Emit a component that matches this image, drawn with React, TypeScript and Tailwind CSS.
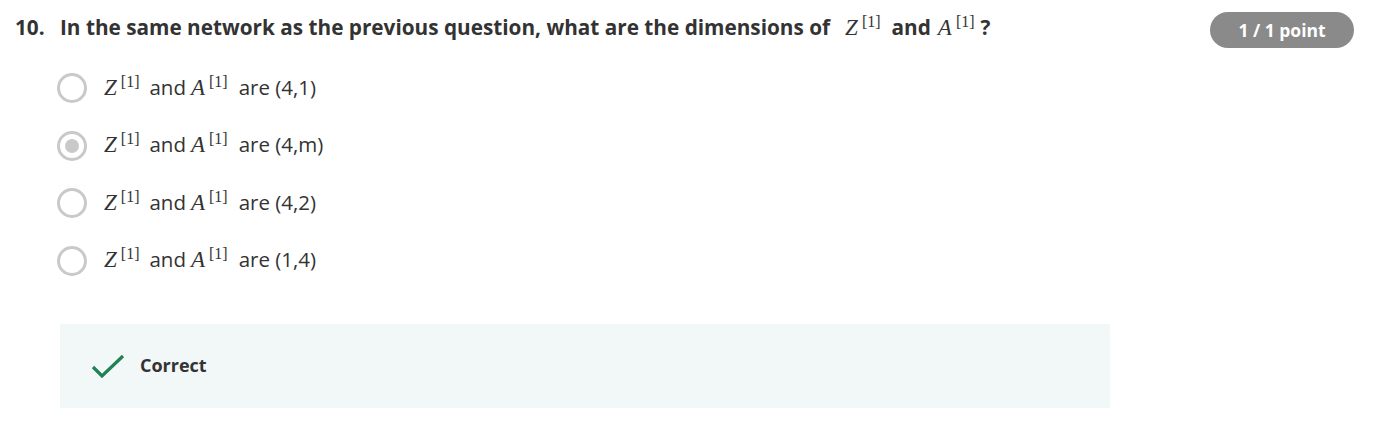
import React from 'react';

const M = ({ v, className = '' }: { v: string; className?: string }) => (
  <span className={`whitespace-nowrap font-normal ${className}`} style={{ fontFamily: '"Liberation Serif", "DejaVu Serif", serif' }}>
    <span className="italic text-[23px]">{v}</span>
    <span className="relative -top-[8px] text-[16px] ml-[4px]">[1]</span>
  </span>
);

const options = [
  { label: '(4,1)', selected: false },
  { label: '(4,m)', selected: true },
  { label: '(4,2)', selected: false },
  { label: '(1,4)', selected: false },
];

const Radio = ({ selected }: { selected: boolean }) => (
  <div className="w-[30px] h-[30px] rounded-full border-[3px] border-[#c9c9c9] flex items-center justify-center shrink-0">
    {selected && <div className="w-[14px] h-[14px] rounded-full bg-[#c9c9c9]" />}
  </div>
);

export default function App() {
  return (
    <div className="w-[1384px] h-[424px] bg-white text-[#333333]" style={{ fontFamily: '"Open Sans", sans-serif' }}>
      <div className="flex items-start justify-between pl-[15px] pr-[30px] pt-[12px]">
        <h2 className="flex items-baseline text-[20.75px] font-bold leading-[30px] text-[#333333]">
          <span className="w-[45px]">10.</span>
          <span>
            In the same network as the previous question, what are the dimensions of
            <M v="Z" className="ml-[15px] mr-[11px]" />
            and
            <M v="A" className="ml-[7px] mr-[6px]" />?
          </span>
        </h2>
        <div className="w-[144px] h-[36px] rounded-full bg-[#8a8a8a] text-white text-[17.5px] font-bold flex items-center justify-center">
          1 / 1 point
        </div>
      </div>

      <div className="flex flex-col gap-[27.5px] pl-[57px] pt-[25px]">
        {options.map((o) => (
          <div key={o.label} className="flex items-center h-[30px]">
            <Radio selected={o.selected} />
            <div className="ml-[17px] text-[20.5px] text-[#333333] leading-[30px]">
              <M v="Z" className="mr-[10px]" />
              and
              <M v="A" className="ml-[5px] mr-[11px]" />
              are {o.label}
            </div>
          </div>
        ))}
      </div>

      <div className="ml-[60px] mt-[48px] w-[1050px] h-[84px] bg-[#f2f8f7] flex items-center pl-[31px]">
        <svg width="34" height="24" viewBox="0 0 34 24" fill="none">
          <path d="M2 13 L11 22 L32 2" stroke="#1f8354" strokeWidth="3.2" />
        </svg>
        <span className="ml-[15px] text-[18px] font-bold text-[#333333]">Correct</span>
      </div>
    </div>
  );
}
